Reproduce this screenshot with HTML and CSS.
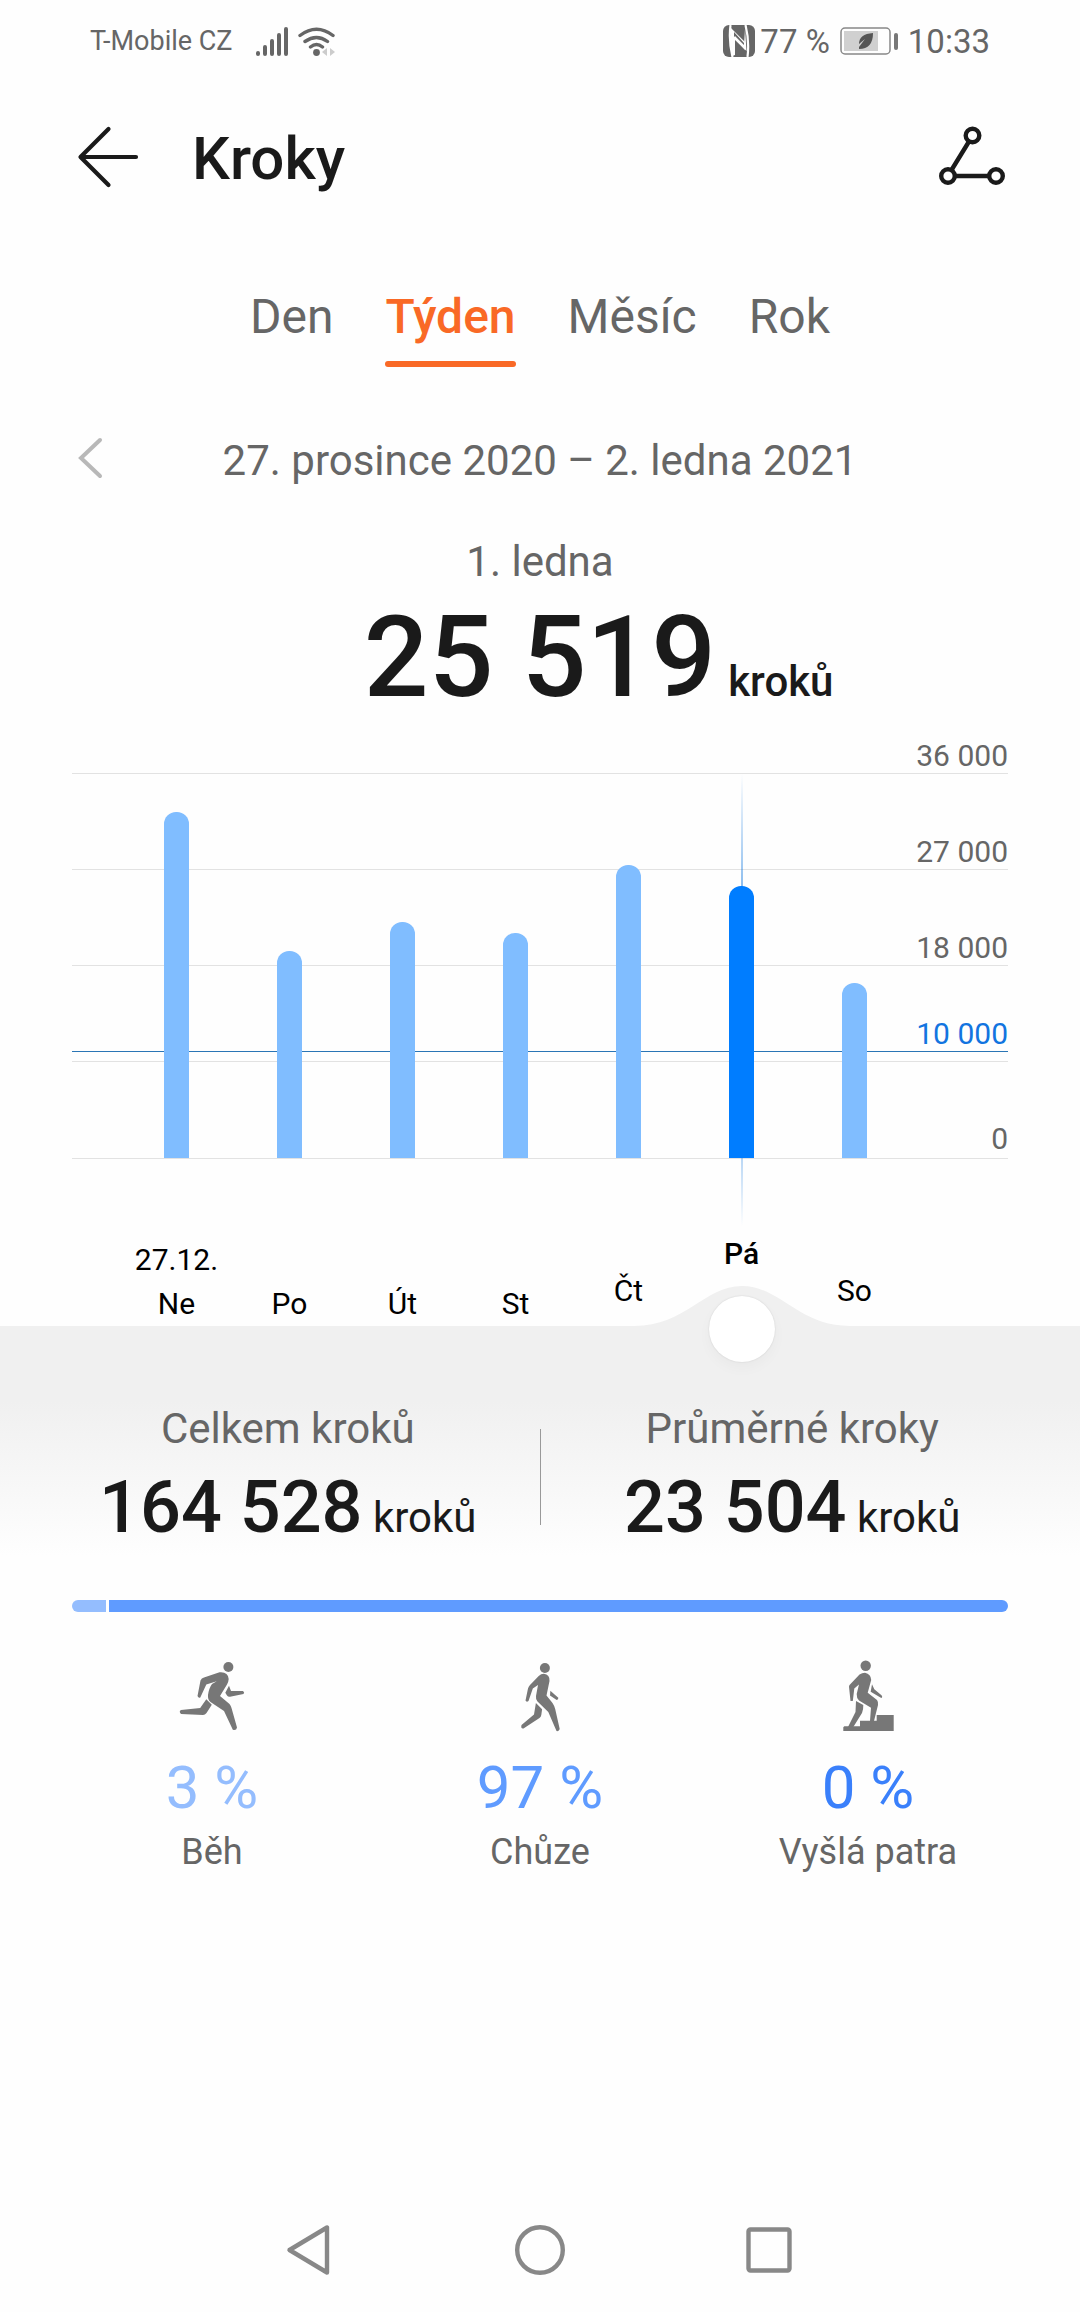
FILE: index.html
```html
<!DOCTYPE html>
<html lang="cs">
<head>
<meta charset="utf-8">
<meta name="viewport" content="width=device-width, initial-scale=1">
<title>Kroky</title>
<link rel="stylesheet" href="styles.css">
</head>
<body>
<div class="status">
  <div class="status-side">
    <span class="carrier">T-Mobile CZ</span>
    <svg class="status-signal" width="82" height="36" viewBox="0 0 82 36" aria-hidden="true">
      <g stroke="#666" stroke-width="4" stroke-linecap="round" fill="none">
        <path d="M4 30v1M11 24v7M18 18v13M25 12v19M32 6v25"/>
        <path d="M46 12.500Q62.500 0 79 12.500M51 18.500Q62.500 10.500 73.500 18.500M56.500 24Q62.500 19 68.500 24" stroke-width="3.400"/>
      </g>
      <circle cx="62.500" cy="29.500" r="3.400" fill="#666"/>
      <path d="M73 25v8l-5-4zM76 25v8l5-4z" fill="#ccc"/>
    </svg>
  </div>
  <div class="status-side">
    <svg width="32" height="32" viewBox="0 0 32 32" aria-hidden="true">
      <rect width="32" height="32" rx="6" fill="#666"/>
      <path d="M7.500 0Q5.500 16 9.500 32M22.500 0Q26.500 16 24.500 32" stroke="#fefefe" stroke-width="2.200" fill="none"/>
      <path d="M8 3L22 17V25L12 14V30L9 31Q7 16 8 3z" fill="#fefefe"/>
      <path d="M21 4V23L11 11V7L21 18z" fill="#666"/>
      <path d="M22 4L23.500 26L12 15V11L21 20z" fill="#fefefe"/>
    </svg>
    <span class="battery-level">77 %</span>
    <svg class="battery" width="58" height="28" viewBox="0 0 58 28" aria-hidden="true">
      <rect x="1" y="1" width="49" height="26" rx="4" fill="none" stroke="#888" stroke-width="1.500"/>
      <rect x="4" y="4" width="34" height="20" fill="#d0d0d0"/>
      <path d="M33 6Q19 7 19 17L25 12L19 20V22Q33 22 33 6z" fill="#555"/>
      <rect x="54" y="6" width="4" height="17" rx="2" fill="#777"/>
    </svg>
    <time>10:33</time>
  </div>
</div>

<header class="topbar">
  <button class="icon-button" aria-label="Zpět">
    <svg width="72" height="72" viewBox="0 0 72 72" aria-hidden="true"><path d="M64 34H9M36.500 6L8.500 34L36.500 62" fill="none" stroke="#1a1a1a" stroke-width="4.200" stroke-linecap="round" stroke-linejoin="round"/></svg>
  </button>
  <h1>Kroky</h1>
  <button class="icon-button" aria-label="Trasa">
    <svg width="72" height="72" viewBox="0 0 72 72" aria-hidden="true"><g fill="none" stroke="#1a1a1a" stroke-width="4.400"><circle cx="36.500" cy="12.500" r="6.800"/><circle cx="12" cy="53" r="6.800"/><circle cx="60" cy="53" r="6.800"/><path d="M33 18.500L15.500 47M19 53h34"/></g></svg>
  </button>
</header>

<main>
  <div class="tabs" role="tablist">
    <button class="tab" role="tab">Den</button>
    <button class="tab tab-active" role="tab" aria-selected="true">Týden</button>
    <button class="tab" role="tab">Měsíc</button>
    <button class="tab" role="tab">Rok</button>
  </div>

  <div class="period">
    <button class="icon-button" aria-label="Předchozí týden">
      <svg width="40" height="64" viewBox="0 0 40 64" aria-hidden="true"><path d="M28 11L9 29L28 47" fill="none" stroke="#b8b8b8" stroke-width="4" stroke-linecap="round"/></svg>
    </button>
    <span>27. prosince 2020 – 2. ledna 2021</span>
  </div>

  <section class="selected">
    <p class="selected-date">1. ledna</p>
    <p class="selected-value"><strong>25 519</strong><span>kroků</span></p>
  </section>

  <section class="chart">
    <div class="plot">
      <div class="gridlines">
        <div class="gridline gridline-top">36 000</div>
        <div class="gridline">27 000</div>
        <div class="gridline">18 000</div>
        <div class="gridline"></div>
        <div class="gridline gridline-zero">0</div>
      </div>
      <div class="goals"><div class="goal" style="height:27.800%"><span>10 000</span></div></div>
      <div class="bars">
        <div class="slot"><div class="bar" style="height:90%"></div></div>
        <div class="slot"><div class="bar" style="height:54%"></div></div>
        <div class="slot"><div class="bar" style="height:61.500%"></div></div>
        <div class="slot"><div class="bar" style="height:58.500%"></div></div>
        <div class="slot"><div class="bar" style="height:76.300%"></div></div>
        <div class="slot slot-selected"><div class="bar" style="height:70.800%"></div></div>
        <div class="slot"><div class="bar" style="height:45.500%"></div></div>
      </div>
    </div>
    <div class="days">
      <div class="day">27.12.<br>Ne</div>
      <div class="day">Po</div>
      <div class="day">Út</div>
      <div class="day">St</div>
      <div class="day day-near">Čt</div>
      <div class="day day-selected">
        <svg class="hump" width="216" height="41" viewBox="0 0 216 41" aria-hidden="true"><path d="M0 41C52 41 70 1 108 1S164 41 216 41z" fill="#f0f0f0"/></svg>
        <span>Pá</span>
        <button class="thumb" aria-label="Vybraný den"></button>
      </div>
      <div class="day day-near">So</div>
    </div>
  </section>

  <section class="totals">
    <div class="total">
      <p class="total-label">Celkem kroků</p>
      <p class="total-value"><strong>164 528</strong> kroků</p>
    </div>
    <div class="divider"></div>
    <div class="total">
      <p class="total-label">Průměrné kroky</p>
      <p class="total-value"><strong>23 504</strong> kroků</p>
    </div>
  </section>

  <section class="split">
    <div class="split-bar">
      <div class="split-run" style="width:3.600%"></div>
      <div class="split-walk"></div>
    </div>
    <div class="activities">
      <div class="activity">
        <svg width="72" height="72" viewBox="0 0 72 72" aria-hidden="true"><g fill="#777"><circle cx="52.400" cy="7" r="5"/><path d="M28 17.500L43.500 12.300Q52 11.500 52.700 19Q52.500 22 51 24.500L44 36L53.500 44Q55 46 55.500 48L61 67.500Q60.500 70.500 57.500 70Q56.500 70 56 68L48 51L34.500 42Q31.500 39.500 32 35Q33 28 36 24L40.700 21.300L30.300 24.500L24.300 37.500Q22.500 38.500 21.500 36L24.500 20.500Q25.500 18 28 17.500z"/><path d="M53 25.700L55 31L67 31Q69 32.500 67.500 34L54 36.800Q52 37 51 35.500L49.300 32.700z"/><path d="M30.300 39.300L35.800 44.700L30.500 53Q29 55 27 55L5 54Q2.500 51.500 5 50L24.200 48z"/></g></svg>
        <p class="percent percent-run">3 %</p>
        <p class="activity-name">Běh</p>
      </div>
      <div class="activity">
        <svg width="72" height="72" viewBox="0 0 72 72" aria-hidden="true"><g fill="#777"><circle cx="40.900" cy="8" r="5"/><path d="M34.700 16Q37 13.700 39.800 13.700Q46 14.500 45.500 21L42.500 35.500L48.500 43Q50.500 46 51.200 49L55.700 69Q55 71.700 52.500 71L44.300 52L33.500 41.500Q31.500 39 32 36L34 25L28.800 28.500L24.500 41Q22.500 42.500 21.500 40.500L24 28.500Q24.500 26.500 26 25z"/><path d="M46.300 30.700L54.300 37.700Q54.500 39.500 52.700 40L46 35.500z"/><path d="M31.900 43L38.100 49.300L37.300 55Q37 57 35.500 58L19.500 68.500Q16.500 69 17.500 65L30 54.500z"/></g></svg>
        <p class="percent percent-walk">97 %</p>
        <p class="activity-name">Chůze</p>
      </div>
      <div class="activity">
        <svg width="72" height="72" viewBox="0 0 72 72" aria-hidden="true"><g fill="#777"><circle cx="33.700" cy="5.700" r="5.200"/><path d="M27.500 14.500Q30 12.700 33 12.700Q39 14 39.200 20L35.700 32.700L45 40Q46.500 42 46 45L42 61H38L39 47.700L27 40.500Q24.500 38 24.700 34L27 24.500L22.300 28.500L20.800 41H18.500L17 26.700Q17 25.500 18 24.500z"/><path d="M40 24.300L42.300 29.300L49.500 35.300Q51 37.500 49.300 38L38.700 31.700z"/><path d="M24 41L31.300 45Q31.500 49 30 53L21.300 67H16L23.500 52z"/><path d="M12.300 66.300H28V60.700H44.700V55H61.700V71H11.300V67.300z"/></g></svg>
        <p class="percent percent-climb">0 %</p>
        <p class="activity-name">Vyšlá patra</p>
      </div>
    </div>
  </section>
</main>

<nav class="navbar">
  <button class="icon-button" aria-label="Zpět"><svg width="72" height="72" viewBox="0 0 72 72" aria-hidden="true"><path d="M53 13.500V58.500L15.500 36z" fill="none" stroke="#888" stroke-width="4.400" stroke-linejoin="round"/></svg></button>
  <button class="icon-button" aria-label="Domů"><svg width="72" height="72" viewBox="0 0 72 72" aria-hidden="true"><circle cx="36" cy="36" r="22.800" fill="none" stroke="#888" stroke-width="4.400"/></svg></button>
  <button class="icon-button" aria-label="Poslední aplikace"><svg width="72" height="72" viewBox="0 0 72 72" aria-hidden="true"><rect x="14.500" y="15.500" width="41" height="41" rx="2" fill="none" stroke="#888" stroke-width="4.400"/></svg></button>
</nav>
</body>
</html>
```
FILE: styles.css
```css
* { box-sizing: border-box; }

body {
  margin: 0;
  min-height: 100vh;
  display: flex;
  flex-direction: column;
  background: #fefefe;
  color: #1a1a1a;
  font-family: Roboto, "Noto Sans", sans-serif;
}

p, h1 { margin: 0; }
strong, h1 { font-weight: 500; }
svg { display: block; }

button {
  padding: 0;
  border: 0;
  background: none;
  color: inherit;
  font: inherit;
}

/* System status bar */
.status {
  display: flex;
  justify-content: space-between;
  height: 82px;
  padding: 0 90px;
  color: #666;
  font-size: 33px;
}
.status-side { display: flex; align-items: center; }
.carrier { font-size: 27px; }
.status-signal { margin-left: 21px; }
.battery-level { margin: 0 10px 0 5px; }
.battery { margin-right: 10px; }

/* Title bar */
.topbar {
  display: flex;
  align-items: center;
  gap: 48px;
  height: 153px;
  padding: 0 72px;
}
.topbar h1 { flex: 1; font-size: 60px; line-height: 72px; }

/* Range tabs */
.tabs {
  display: flex;
  justify-content: center;
  gap: 52px;
  padding-top: 50px;
}
.tab {
  padding-bottom: 12px;
  border-bottom: 6px solid transparent;
  color: #666;
  font-size: 48px;
  line-height: 64px;
}
.tab-active {
  position: relative;
  color: #f96926;
  font-weight: 500;
}
.tab-active::after {
  content: "";
  position: absolute;
  left: 0;
  right: 0;
  bottom: -6px;
  height: 6px;
  border-radius: 3px;
  background: #f96926;
}

.period {
  display: grid;
  grid-template-columns: 1fr auto 1fr;
  margin-top: 62px;
  padding: 0 72px;
  color: #666;
  font-size: 42px;
  line-height: 64px;
}

/* Value of the selected day */
.selected { padding-top: 44px; text-align: center; }
.selected-date { color: #666; font-size: 42px; line-height: 50px; }
.selected-value {
  display: grid;
  grid-template-columns: 1fr auto 1fr;
  align-items: baseline;
  margin-top: 10px;
}
.selected-value strong { grid-column: 2; font-size: 114px; line-height: 120px; }
.selected-value span {
  padding-left: 12px;
  font-size: 42px;
  font-weight: 500;
  text-align: left;
}

/* Weekly chart */
.chart { padding: 16px 72px 0; font-size: 30px; }
.plot { display: grid; }
.gridlines, .goals, .bars { grid-area: 1 / 1; }
.gridline {
  display: flex;
  align-items: flex-end;
  justify-content: flex-end;
  height: 96px;
  padding-bottom: 3px;
  border-bottom: 1px solid #e2e2e2;
  color: #666;
  line-height: 28px;
}
.gridline-top { height: 41px; }
.gridline-zero { height: 97px; padding-bottom: 5px; }

.goals {
  display: flex;
  align-items: flex-end;
  margin: 41px 0 1px;
}
.goal {
  position: relative;
  flex: 1;
  border-top: 1px solid #2a75b5;
  color: #1274e0;
  line-height: 28px;
}
.goal span { position: absolute; right: 0; bottom: 100%; padding-bottom: 4px; }

.bars, .days {
  display: grid;
  grid-template-columns: repeat(7, 1fr);
  padding: 0 97px 0 48px;
}
.bars { margin: 41px 0 1px; }
.slot {
  position: relative;
  display: flex;
  flex-direction: column;
  justify-content: flex-end;
  align-items: center;
}
.bar {
  position: relative;
  width: 25px;
  border-radius: 12px 12px 0 0;
  background: #80bdff;
}
.slot-selected .bar { background: #007dff; }
.slot-selected::before {
  content: "";
  position: absolute;
  top: 0;
  bottom: -68px;
  width: 2px;
  background: linear-gradient(rgba(0, 110, 220, 0), rgba(0, 110, 220, 0.9), rgba(0, 110, 220, 0));
}

.days { height: 167px; align-items: end; }
.day { color: #000; line-height: 44px; text-align: center; }
.day-near { padding-bottom: 13px; }
.day-selected { position: relative; padding-bottom: 50px; font-weight: 500; }
.hump, .thumb { position: absolute; left: 50%; transform: translateX(-50%); }
.hump { bottom: 0; }
.thumb {
  bottom: -36px;
  width: 66px;
  height: 66px;
  border-radius: 50%;
  background: #fff;
  box-shadow: 0 0 2px rgba(0, 0, 0, 0.12), 0 6px 14px rgba(0, 0, 0, 0.03);
}

/* Weekly totals */
.totals {
  display: grid;
  grid-template-columns: 1fr 1px 1fr;
  align-items: center;
  padding: 78px 36px 50px;
  background: linear-gradient(#f0f0f0, #f0f0f0 75px, #fefefe 230px);
  text-align: center;
}
.total-label { color: #666; font-size: 42px; line-height: 50px; }
.total-value { margin-top: 12px; font-size: 42px; line-height: 50px; }
.total-value strong { font-size: 72px; line-height: 84px; }
.divider { height: 96px; background: #999; }

/* Split by activity */
.split-bar {
  display: flex;
  gap: 3px;
  height: 12px;
  margin: 0 72px;
  border-radius: 6px;
  overflow: hidden;
}
.split-run { background: #94bdfe; }
.split-walk { flex: 1; background: #5f9bff; }
.activities {
  display: grid;
  grid-template-columns: repeat(3, 1fr);
  padding: 48px 48px 0;
  text-align: center;
}
.activity { display: flex; flex-direction: column; align-items: center; }
.percent { margin-top: 20px; font-size: 60px; line-height: 72px; }
.percent-run { color: #94bdfe; }
.percent-walk { color: #5f9bff; }
.percent-climb { color: #3a80fb; }
.activity-name { margin-top: 4px; color: #666; font-size: 36px; line-height: 48px; }

/* System navigation */
.navbar {
  display: flex;
  justify-content: center;
  align-items: center;
  gap: 158px;
  height: 124px;
  margin-top: auto;
}
```
